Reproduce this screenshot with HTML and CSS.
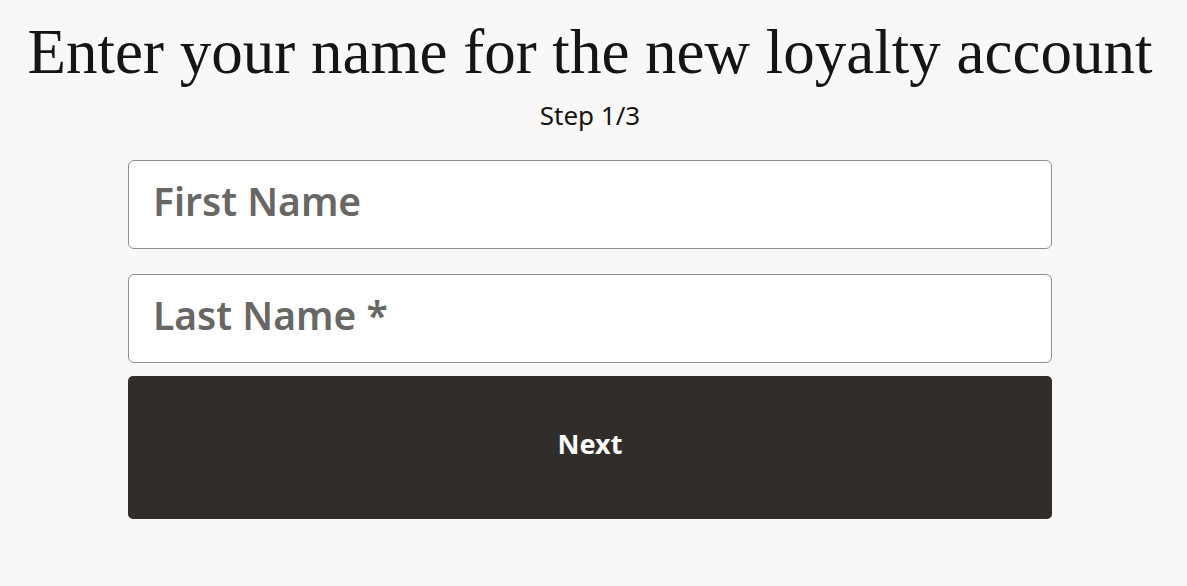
FILE: index.html
```html
<!DOCTYPE html>
<html>
<head>
    <meta charset="utf-8">
    <meta name="viewport" content="width=device-width, initial-scale=1.0">
    <title>Loyalty account</title>
    <link rel="stylesheet" href="styles.css">
</head>
<body>
    <div class="page">
        <h1 class="title">Enter your name for the new loyalty account</h1>
        <div class="step">Step 1/3</div>

        <form class="name-form" onsubmit="return false;">
            <input type="text" class="field" placeholder="First Name">
            <input type="text" class="field" placeholder="Last Name *">
            <button type="submit" class="next-btn">Next</button>
        </form>
    </div>
</body>
</html>
```

FILE: styles.css
```css
html, body {
    margin: 0;
    padding: 0;
    background: #f9f8f6;
}
.page {
    display: flex;
    flex-direction: column;
    align-items: center;
    padding: 17px 7px 0 0;
}
.title {
    margin: 0;
    font-family: "Liberation Serif", serif;
    font-weight: normal;
    font-size: 63px;
    line-height: 70px;
    color: #161513;
    text-align: center;
    white-space: nowrap;
}
.step {
    margin-top: 12px;
    font-family: "Noto Sans", sans-serif;
    font-size: 26px;
    line-height: 32px;
    color: #161513;
}
.name-form {
    width: 924px;
    margin-top: 29px;
    display: flex;
    flex-direction: column;
}
.field {
    box-sizing: border-box;
    height: 89px;
    width: 100%;
    margin-bottom: 25px;
    padding: 0 24px 8px;
    background: #fff;
    border: 1px solid #8f8f8f;
    border-radius: 6px;
    font-family: "Noto Sans", sans-serif;
    font-weight: 600;
    font-size: 39px;
    color: #161513;
    outline: none;
}
.field + .field {
    margin-bottom: 13px;
}
.field::placeholder {
    color: #686765;
}
.next-btn {
    height: 143px;
    width: 100%;
    padding: 0 0 8px;
    border: none;
    border-radius: 5px;
    background: #312d2a;
    color: #fff;
    font-family: "Noto Sans", sans-serif;
    font-weight: bold;
    font-size: 27px;
    cursor: pointer;
}
```
